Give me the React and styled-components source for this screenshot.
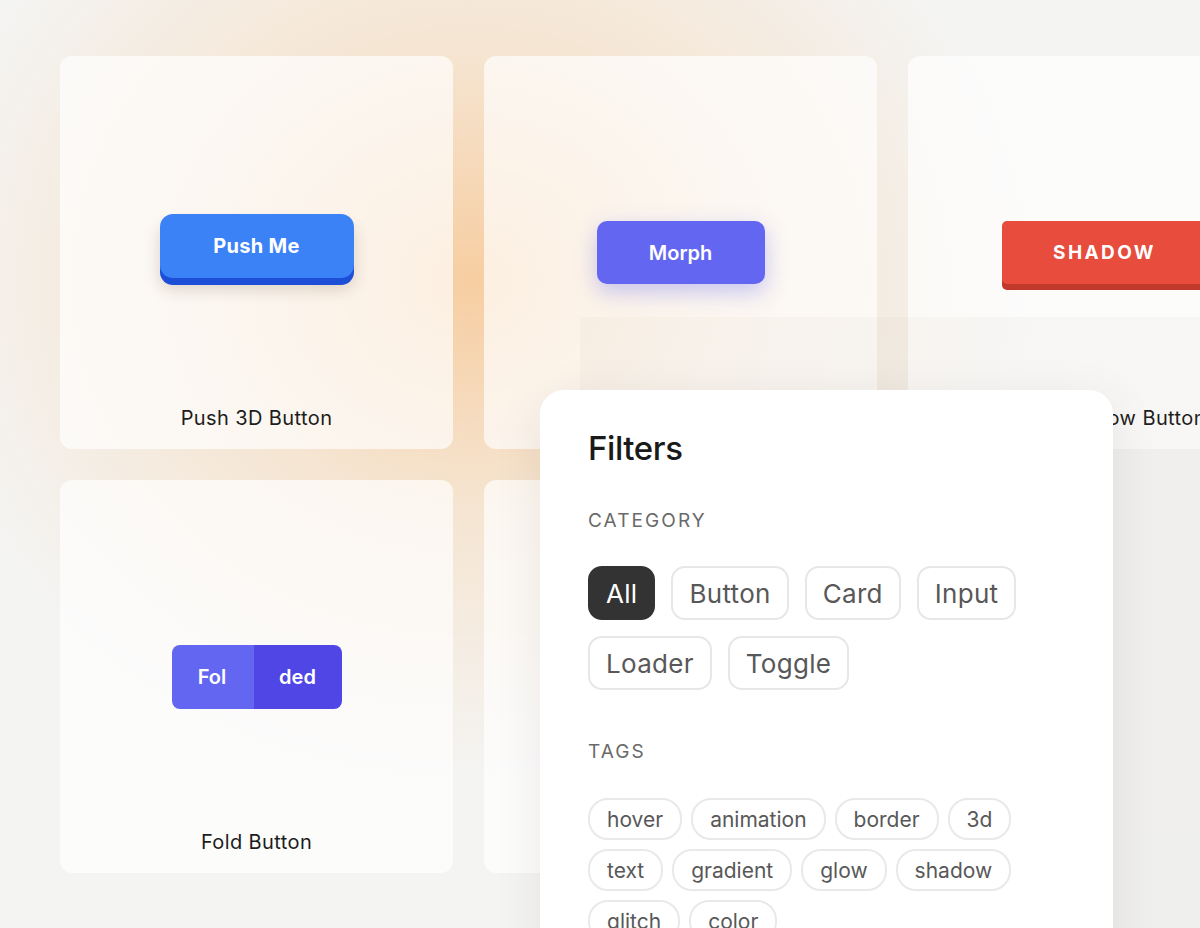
import React from "react";
import styled, { createGlobalStyle } from "styled-components";

const Global = createGlobalStyle`
  html, body { margin: 0; padding: 0; }
  body {
    font-family: Inter, "Noto Sans", "Liberation Sans", sans-serif;
    background: #f4f4f3;
    -webkit-font-smoothing: antialiased;
  }
  * { box-sizing: border-box; }
`;

const Page = styled.div`
  position: relative;
  width: 1200px;
  height: 928px;
  overflow: hidden;
  background:
    radial-gradient(ellipse 560px 500px at 470px 280px, rgba(247, 200, 150, 0.88) 0%, rgba(247, 212, 172, 0.48) 45%, rgba(244, 244, 243, 0) 100%),
    #f4f4f3;
  padding: 56px 0 0 60px;
`;

const Grid = styled.div`
  display: grid;
  grid-template-columns: repeat(3, 393px);
  grid-auto-rows: 393px;
  gap: 31px;
`;

const Card = styled.div`
  display: grid;
  grid-template-rows: 1fr auto;
  background: rgba(255, 255, 255, 0.68);
  border-radius: 12px;
`;

const Stage = styled.div`
  display: flex;
  align-items: center;
  justify-content: center;
  padding-top: 37px;
`;

const Label = styled.div`
  text-align: center;
  font-size: 20px;
  line-height: 24px;
  min-height: 43px;
  color: #1d1d1d;
  padding-bottom: 19px;
  letter-spacing: 0.4px;
  white-space: nowrap;
`;

const PushButton = styled.button`
  width: 194px;
  height: 64px;
  margin-bottom: 7px;
  border: none;
  border-radius: 13px;
  background: #3b82f6;
  color: #fff;
  font-family: inherit;
  font-size: 20px;
  font-weight: 700;
  letter-spacing: 0.3px;
  box-shadow: 0 7px 0 #1d4ed8, 0 11px 16px rgba(60, 40, 20, 0.18);
`;

const MorphButton = styled.button`
  width: 168px;
  height: 63px;
  margin-top: 6px;
  border: none;
  border-radius: 10px;
  background: #6366f1;
  color: #fff;
  font-family: inherit;
  font-size: 20px;
  font-weight: 600;
  box-shadow: 0 8px 22px rgba(99, 102, 241, 0.35);
`;

const ShadowButton = styled.button`
  width: 205px;
  height: 63px;
  margin-top: 6px;
  border: none;
  border-radius: 5px;
  background: #e74c3c;
  color: #fff;
  font-family: inherit;
  font-size: 19px;
  font-weight: 700;
  letter-spacing: 2.4px;
  box-shadow: 0 6px 0 #c0392b;
`;

const FoldButton = styled.div`
  display: flex;
  height: 64px;
  margin-top: 6px;
  border-radius: 8px;
  overflow: hidden;
  color: #fff;
  font-size: 20px;
  font-weight: 600;
`;

const FoldHalf = styled.div`
  width: ${(p) => p.$w}px;
  display: flex;
  align-items: center;
  justify-content: center;
  background: ${(p) => p.$bg};
  border-left: ${(p) => (p.$divider ? "1px solid rgba(255,255,255,0.18)" : "none")};
`;

const Backdrop = styled.div`
  position: absolute;
  left: 580px;
  top: 317px;
  right: 0;
  bottom: 0;
  background: linear-gradient(180deg, rgba(110, 80, 50, 0.03), rgba(40, 30, 20, 0.025));
  pointer-events: none;
`;

const Panel = styled.aside`
  position: absolute;
  left: 540px;
  top: 390px;
  width: 573px;
  height: 620px;
  background: #fff;
  border-radius: 24px;
  padding: 38px 48px 0;
  box-shadow: 0 10px 50px rgba(40, 30, 20, 0.08);
`;

const Title = styled.h2`
  margin: 0;
  font-size: 33px;
  line-height: 40px;
  font-weight: 500;
  color: #1a1a1a;
  letter-spacing: -0.4px;
`;

const SectionLabel = styled.div`
  margin-top: ${(p) => p.$mt}px;
  font-size: 19px;
  line-height: 24px;
  font-weight: 400;
  color: #6a6a6a;
  letter-spacing: 2.1px;
`;

const ChipRow = styled.div`
  display: flex;
  flex-wrap: wrap;
  gap: ${(p) => p.$gap}px;
  margin-top: ${(p) => p.$mt}px;
  width: 477px;
`;

const Chip = styled.span`
  display: inline-flex;
  align-items: center;
  height: 54px;
  padding: 0 16px;
  border-radius: 14px;
  border: 2px solid ${(p) => (p.$active ? "#333" : "#e7e7e7")};
  background: ${(p) => (p.$active ? "#333" : "#fff")};
  color: ${(p) => (p.$active ? "#fff" : "#585858")};
  font-size: 26px;
  font-weight: 400;
  letter-spacing: 0.3px;
`;

const Tag = styled.span`
  display: inline-flex;
  align-items: center;
  height: 42px;
  padding: 0 17px;
  border-radius: 20px;
  border: 2px solid #e9e9e9;
  color: #585858;
  font-size: 21px;
`;

const categories = ["All", "Button", "Card", "Input", "Loader", "Toggle"];
const tags = ["hover", "animation", "border", "3d", "text", "gradient", "glow", "shadow", "glitch", "color"];

export default function App() {
  return (
    <>
      <Global />
      <Page>
        <Grid>
          <Card>
            <Stage><PushButton>Push Me</PushButton></Stage>
            <Label>Push 3D Button</Label>
          </Card>
          <Card>
            <Stage><MorphButton>Morph</MorphButton></Stage>
            <Label />
          </Card>
          <Card>
            <Stage><ShadowButton>SHADOW</ShadowButton></Stage>
            <Label>Solid Shadow Button</Label>
          </Card>
          <Card>
            <Stage>
              <FoldButton>
                <FoldHalf $w={81} $bg="#6366f1">Fol</FoldHalf>
                <FoldHalf $w={89} $bg="#4f46e5" $divider>ded</FoldHalf>
              </FoldButton>
            </Stage>
            <Label>Fold Button</Label>
          </Card>
          <Card>
            <Stage />
            <Label />
          </Card>
        </Grid>
        <Backdrop />
        <Panel>
          <Title>Filters</Title>
          <SectionLabel $mt={41}>CATEGORY</SectionLabel>
          <ChipRow $gap={16} $mt={33}>
            {categories.map((c, i) => (
              <Chip key={c} $active={i === 0}>{c}</Chip>
            ))}
          </ChipRow>
          <SectionLabel $mt={50}>TAGS</SectionLabel>
          <ChipRow $gap={9} $mt={34}>
            {tags.map((t) => (
              <Tag key={t}>{t}</Tag>
            ))}
          </ChipRow>
        </Panel>
      </Page>
    </>
  );
}
